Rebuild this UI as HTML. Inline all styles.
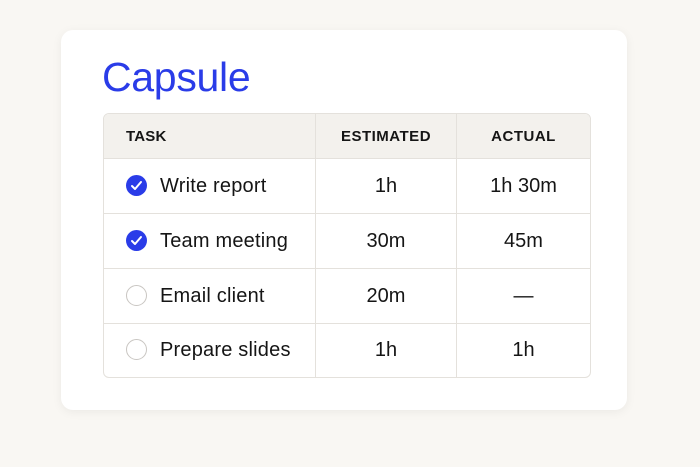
<!DOCTYPE html>
<html><head><style>
body{margin:0;width:700px;height:467px;background:#f9f7f3;font-family:"Liberation Sans",sans-serif;position:relative;overflow:hidden}
.card{position:absolute;left:61px;top:30px;width:566px;height:380px;background:#fff;border-radius:12px;box-shadow:0 2px 10px rgba(0,0,0,0.06)}
h1{position:absolute;left:102px;top:54px;margin:0;font-size:41px;font-weight:400;color:#2a3ce8;letter-spacing:-0.3px}
table{position:absolute;left:103px;top:113px;width:488px;border-collapse:separate;border-spacing:0;border:1px solid #e4e1dc;border-radius:6px;overflow:hidden}
td,th{border-right:1px solid #e4e1dc;border-bottom:1px solid #e4e1dc;font-size:20px;color:#151515;text-align:center;padding:0}
th{height:44px;background:#f3f1ed;font-size:15px;font-weight:700;letter-spacing:0.5px}
td{height:54px}
tr:last-child td{height:53px}
.t{letter-spacing:0.2px}
tr td:last-child,tr th:last-child{border-right:none}
tr:last-child td{border-bottom:none}
.t{text-align:left;padding-left:22px}
th.t{padding-left:22px}
.c{display:inline-block;width:21px;height:21px;border-radius:50%;vertical-align:-4px;margin-right:13px;box-sizing:border-box}
.on{background:#2a3ce8}
.off{border:1.5px solid #c9c6c2}
</style></head><body>
<div class="card"></div>
<h1>Capsule</h1>
<table>
<tr><th class="t" style="width:189px">TASK</th><th style="width:140px">ESTIMATED</th><th>ACTUAL</th></tr>
<tr><td class="t"><span class="c on"><svg width="21" height="21" viewBox="0 0 21 21"><path d="M6 11l3 3 6-7" fill="none" stroke="#fff" stroke-width="2" stroke-linecap="round" stroke-linejoin="round"/></svg></span>Write report</td><td>1h</td><td>1h 30m</td></tr>
<tr><td class="t"><span class="c on"><svg width="21" height="21" viewBox="0 0 21 21"><path d="M6 11l3 3 6-7" fill="none" stroke="#fff" stroke-width="2" stroke-linecap="round" stroke-linejoin="round"/></svg></span>Team meeting</td><td>30m</td><td>45m</td></tr>
<tr><td class="t"><span class="c off"></span>Email client</td><td>20m</td><td>—</td></tr>
<tr><td class="t"><span class="c off"></span>Prepare slides</td><td>1h</td><td>1h</td></tr>
</table>
</body></html>
